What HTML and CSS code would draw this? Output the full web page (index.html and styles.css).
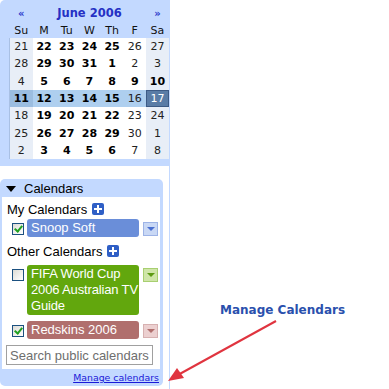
FILE: index.html
```html
<!DOCTYPE html>
<html>
<head>
<meta charset="utf-8">
<link rel="stylesheet" href="styles.css">
</head>
<body>
<div class="page">
  <aside class="sidebar">
    <section class="minical">
      <div class="cal-grid head">
        <span class="nav">&laquo;</span>
        <span class="month">June 2006</span>
        <span class="nav">&raquo;</span>
      </div>
      <div class="cal-grid dow">
        <span>Su</span><span>M</span><span>Tu</span><span>W</span><span>Th</span><span>F</span><span>Sa</span>
      </div>
      <div class="cal-grid days">
        <span class="we off">21</span><span>22</span><span>23</span><span>24</span><span>25</span><span class="off">26</span><span class="we off">27</span>
        <span class="we off">28</span><span>29</span><span>30</span><span>31</span><span>1</span><span class="off">2</span><span class="we off">3</span>
        <span class="we off">4</span><span>5</span><span>6</span><span>7</span><span>8</span><span>9</span><span class="we">10</span>
        <span class="sel selsun">11</span><span class="sel">12</span><span class="sel">13</span><span class="sel">14</span><span class="sel">15</span><span class="sel off">16</span><span class="today">17</span>
        <span class="we off">18</span><span>19</span><span>20</span><span>21</span><span>22</span><span class="off">23</span><span class="we off">24</span>
        <span class="we off">25</span><span>26</span><span>27</span><span>28</span><span>29</span><span class="off">30</span><span class="we off">1</span>
        <span class="we off">2</span><span>3</span><span>4</span><span>5</span><span>6</span><span class="off">7</span><span class="we off">8</span>
      </div>
    </section>

    <section class="calbox">
      <div class="calbox-title"><span class="tri"></span>Calendars</div>
      <div class="calbox-body">
        <div class="group-title">My Calendars <span class="plus"></span></div>
        <div class="cal-row">
          <span class="chk on"></span>
          <span class="bar blue">Snoop Soft</span>
          <span class="dd dd-blue"></span>
        </div>
        <div class="group-title second">Other Calendars <span class="plus"></span></div>
        <div class="cal-row">
          <span class="chk"></span>
          <span class="bar green">FIFA World Cup<br>2006 Australian TV<br>Guide</span>
          <span class="dd dd-green"></span>
        </div>
        <div class="cal-row">
          <span class="chk on"></span>
          <span class="bar red">Redskins 2006</span>
          <span class="dd dd-red"></span>
        </div>
        <input class="search" type="text" placeholder="Search public calendars">
      </div>
      <div class="calbox-foot"><a href="#">Manage calendars</a></div>
    </section>
  </aside>

  <div class="callout">Manage Calendars</div>
  <svg class="arrow" width="120" height="70" viewBox="0 0 120 70">
    <line x1="112" y1="3" x2="12" y2="58" stroke="#e0343f" stroke-width="2"/>
    <polygon points="4,63 13,50 20,60" fill="#e0343f"/>
  </svg>
</div>
</body>
</html>
```

FILE: styles.css
```css
html, body {
  margin: 0;
  padding: 0;
  background: #fff;
}
.page {
  position: relative;
  width: 389px;
  height: 389px;
  overflow: hidden;
}
.sidebar {
  width: 169px;
  height: 389px;
  border-right: 1px solid #c3d9ff;
  display: flex;
  flex-direction: column;
}

/* mini calendar */
.minical {
  background: #c3d9ff;
  border-top-left-radius: 5px;
  padding: 0 0 7px 10px;
  font-family: "DejaVu Sans", Verdana, sans-serif;
  font-size: 11px;
}
.cal-grid {
  display: grid;
  grid-template-columns: repeat(7, 22.7px);
}
.head {
  height: 18px;
  padding-top: 4px;
  align-items: center;
  text-align: center;
}
.head .nav {
  color: #2b3acb;
  font-size: 10px;
  font-weight: bold;
}
.head .month {
  grid-column: span 5;
  color: #2530c4;
  font-weight: bold;
  font-size: 11.5px;
}
.dow {
  height: 16px;
  align-items: center;
  text-align: center;
  color: #111;
}
.days {
  grid-auto-rows: 17.3px;
  background: #fff;
  border-left: 1px solid #a9c0e4;
  margin-left: -1px;
}
.days span {
  display: flex;
  align-items: center;
  justify-content: center;
  font-weight: bold;
  color: #000;
}
.days span.off {
  font-weight: normal;
  color: #222;
}
.days span.we {
  background: #e8eef7;
}
.days span.sel {
  background: #aecfef;
}
.days span.selsun {
  background: #9bbde0;
}
.days span.today {
  background: #5a7ca6;
  color: #fff;
  font-weight: normal;
  box-shadow: inset 0 0 0 1px #3c5a85;
}

/* calendars box */
.calbox {
  margin-top: 13px;
  width: 163px;
  background: #c3d9ff;
  border-radius: 5px;
  padding: 0 3px 0 2px;
  box-sizing: border-box;
  font-family: "Liberation Sans", Arial, sans-serif;
  font-size: 13px;
  color: #000;
}
.calbox-title {
  height: 18px;
  display: flex;
  align-items: center;
  padding-left: 4px;
}
.tri {
  width: 0;
  height: 0;
  border-left: 5px solid transparent;
  border-right: 5px solid transparent;
  border-top: 6px solid #000;
  margin-right: 8px;
  margin-top: 1px;
}
.calbox-body {
  background: #fff;
  padding: 4px 0 4px 0;
}
.group-title {
  height: 18px;
  line-height: 18px;
  padding-left: 5px;
  display: flex;
  align-items: center;
}
.group-title.second {
  margin-top: 6px;
}
.plus {
  position: relative;
  width: 12px;
  height: 12px;
  margin-left: 5px;
  margin-top: -3px;
  background: #2f5fc6;
  border-radius: 2px;
}
.plus::before, .plus::after {
  content: "";
  position: absolute;
  background: #fff;
}
.plus::before {
  left: 2px;
  top: 5px;
  width: 8px;
  height: 2px;
}
.plus::after {
  left: 5px;
  top: 2px;
  width: 2px;
  height: 8px;
}
.cal-row {
  display: flex;
  align-items: flex-start;
  padding-left: 10px;
}
.cal-row + .cal-row {
  margin-top: 6px;
}
.group-title.second + .cal-row {
  margin-top: 4px;
}
.chk {
  position: relative;
  width: 10px;
  height: 10px;
  border: 1px solid #1c5180;
  background: linear-gradient(135deg, #dcdcd6, #fff);
  margin-top: 4px;
  flex: none;
}
.chk.on::after {
  content: "";
  position: absolute;
  left: 3px;
  top: 0px;
  width: 3px;
  height: 6px;
  border: solid #21a121;
  border-width: 0 2px 2px 0;
  transform: rotate(40deg);
}
.bar {
  width: 112px;
  margin-left: 3px;
  padding: 1px 0 1px 4px;
  box-sizing: border-box;
  border-radius: 3px;
  color: #fff;
  line-height: 16px;
  white-space: nowrap;
  overflow: hidden;
  flex: none;
}
.bar.blue { background: #6a8ed9; }
.bar.green { background: #62a70d; letter-spacing: -0.15px; }
.bar.red { background: #b06f6d; }
.dd {
  position: relative;
  width: 13px;
  height: 12px;
  margin-left: 4px;
  margin-top: 3px;
  border: 1px solid;
  flex: none;
}
.dd::after {
  content: "";
  position: absolute;
  left: 3px;
  top: 4px;
  border-left: 4px solid transparent;
  border-right: 4px solid transparent;
  border-top: 4px solid;
}
.dd-blue { background: #c9d8f5; border-color: #9db3e6; }
.dd-blue::after { border-top-color: #4a6fd0; }
.dd-green { background: #cfe5a8; border-color: #a8cf70; }
.dd-green::after { border-top-color: #5c9a12; }
.dd-red { background: #ecd0d0; border-color: #d7b1b1; }
.dd-red::after { border-top-color: #b06f6d; }

.search {
  display: block;
  margin: 6px 0 0 4px;
  width: 147px;
  height: 20px;
  box-sizing: border-box;
  border: 1px solid #a0a0a0;
  padding: 0 3px;
  font-family: "Liberation Sans", Arial, sans-serif;
  font-size: 13px;
  outline: none;
}
.search::placeholder {
  color: #6e6e6e;
}
.calbox-foot {
  height: 17px;
  display: flex;
  align-items: center;
  justify-content: flex-end;
  padding-right: 1px;
}
.calbox-foot a {
  font-family: "DejaVu Sans", Verdana, sans-serif;
  font-size: 9.4px;
  color: #1a1ad8;
  text-decoration: underline;
}

/* annotation overlay */
.callout {
  position: absolute;
  left: 220px;
  top: 303px;
  font-family: "DejaVu Sans", Verdana, sans-serif;
  font-weight: bold;
  font-size: 12px;
  color: #2a50ad;
}
.arrow {
  position: absolute;
  left: 164px;
  top: 318px;
}
```
